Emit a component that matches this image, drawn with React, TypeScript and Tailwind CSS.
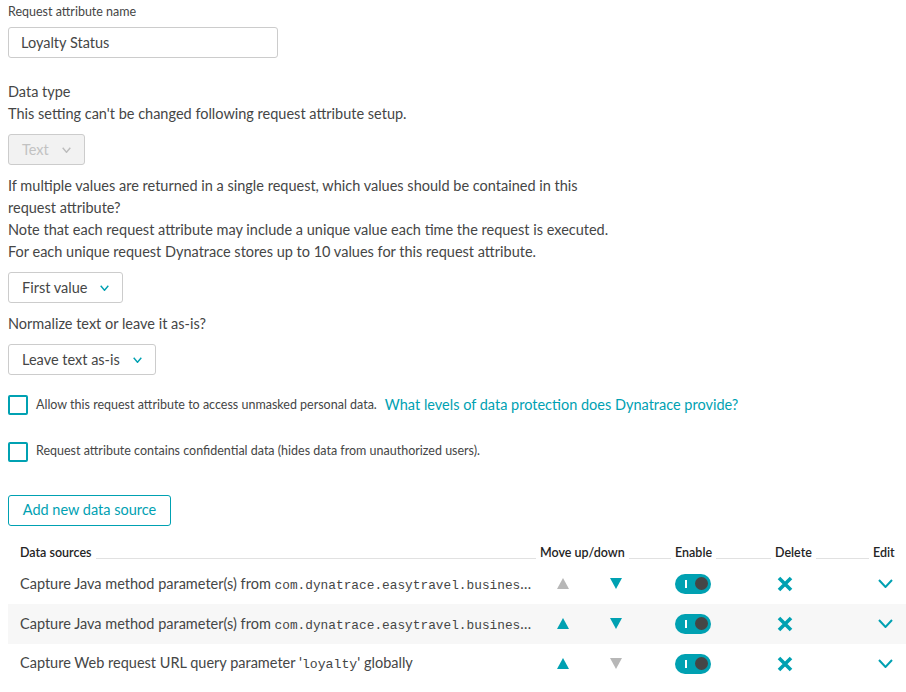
import React from "react";

const TEAL = "#00a1b2";

function Chevron({ color = TEAL, w = 10, h = 6, sw = 1.5 }: { color?: string; w?: number; h?: number; sw?: number }) {
  return (
    <svg width={w} height={h} viewBox={`0 0 ${w} ${h}`} fill="none">
      <path d={`M${sw / 2} ${sw / 2} L${w / 2} ${h - sw / 2} L${w - sw / 2} ${sw / 2}`} stroke={color} strokeWidth={sw} />
    </svg>
  );
}

function Select({ label, width, disabled }: { label: string; width: number; disabled?: boolean }) {
  return (
    <div
      className={`flex h-[31px] items-center rounded-[3px] border pl-[13px] text-[14.5px] ${
        disabled ? "border-[#cccccc] bg-[#f2f2f2] text-[#c2c2c2]" : "border-[#cccccc] bg-white text-[#454646]"
      }`}
      style={{ width }}
    >
      <span>{label}</span>
      <span className="ml-[13px] mt-[1px]">
        <Chevron color={disabled ? "#bdbdbd" : TEAL} w={9} h={6} sw={1.4} />
      </span>
    </div>
  );
}

function Checkbox() {
  return <div className="h-[20px] w-[20px] shrink-0 rounded-[2px] border-2 border-[#00a1b2] bg-white" />;
}

function Up({ active }: { active: boolean }) {
  return (
    <svg width="12" height="11" viewBox="0 0 12 11">
      <path d="M6 0 L12 11 L0 11 Z" fill={active ? TEAL : "#b7b7b7"} />
    </svg>
  );
}
function Down({ active }: { active: boolean }) {
  return (
    <svg width="12" height="11" viewBox="0 0 12 11">
      <path d="M0 0 L12 0 L6 11 Z" fill={active ? TEAL : "#b7b7b7"} />
    </svg>
  );
}

function Toggle() {
  return (
    <div className="flex h-[20px] w-[36px] items-center rounded-full bg-[#00a1b2]">
      <div className="ml-[10px] h-[8px] w-[1.5px] bg-white" />
      <div className="ml-[8px] h-[13px] w-[13px] rounded-full bg-[#454646]" />
    </div>
  );
}

function XIcon() {
  return (
    <svg width="16" height="16" viewBox="0 0 16 16">
      <path d="M2 2 L14 14 M14 2 L2 14" stroke={TEAL} strokeWidth="3.6" />
    </svg>
  );
}

const mono = { fontFamily: '"Liberation Mono", "DejaVu Sans Mono", monospace' };

function Row({ children, up, down, shaded }: { children: React.ReactNode; up: boolean; down: boolean; shaded?: boolean }) {
  return (
    <div className={`grid h-[40px] grid-cols-[532px_135px_100px_98px_33px] items-center ${shaded ? "bg-[#f7f7f7]" : ""}`}>
      <div className="whitespace-nowrap pl-[12px] text-[14.5px] text-[#454646]">{children}</div>
      <div className="flex items-center">
        <div className="ml-[17px]">
          <Up active={up} />
        </div>
        <div className="ml-[41px]">
          <Down active={down} />
        </div>
      </div>
      <div className="flex items-center">
        <Toggle />
      </div>
      <div className="flex items-center pl-[2px]">
        <XIcon />
      </div>
      <div className="flex items-center pl-[5px]">
        <Chevron w={15} h={9} sw={2} />
      </div>
    </div>
  );
}

function HeadCell({ label, line = true }: { label: string; line?: boolean }) {
  return (
    <div className="flex items-end">
      <span className="whitespace-nowrap leading-[16px]">{label}</span>
      {line && <div className="mb-[2px] ml-[4px] mr-[4px] h-px flex-1 bg-[#e1e1e1]" />}
    </div>
  );
}

export default function App() {
  return (
    <div
      className="min-h-[692px] w-[906px] bg-white pl-[8px] text-[#454646]"
      style={{ fontFamily: 'Lato, "Noto Sans", sans-serif' }}
    >
      <div className="pt-[4px] text-[12.5px] leading-[16px]">Request attribute name</div>
      <div className="mt-[7px] flex h-[31px] w-[270px] items-center rounded-[3px] border border-[#cccccc] pl-[12px] text-[14.5px]">
        Loyalty Status
      </div>

      <div className="mt-[23px] text-[14.5px] leading-[22px]">Data type</div>
      <div className="text-[14.5px] leading-[22px]">This setting can't be changed following request attribute setup.</div>
      <div className="mt-[9px]">
        <Select label="Text" width={77} disabled />
      </div>

      <div className="mt-[10px] w-[620px] text-[14.5px] leading-[22px]">
        <div>If multiple values are returned in a single request, which values should be contained in this</div>
        <div>request attribute?</div>
        <div>Note that each request attribute may include a unique value each time the request is executed.</div>
        <div>For each unique request Dynatrace stores up to 10 values for this request attribute.</div>
      </div>
      <div className="mt-[9px]">
        <Select label="First value" width={115} />
      </div>
      <div className="mt-[10px] text-[14.5px] leading-[22px]">Normalize text or leave it as-is?</div>
      <div className="mt-[9px]">
        <Select label="Leave text as-is" width={148} />
      </div>

      <div className="mt-[19px] flex items-center">
        <Checkbox />
        <span className="ml-[8px] text-[12.5px]">Allow this request attribute to access unmasked personal data.</span>
        <span className="ml-[8px] text-[14.5px] text-[#00a1b2]">What levels of data protection does Dynatrace provide?</span>
      </div>
      <div className="mt-[26px] flex items-center">
        <Checkbox />
        <span className="ml-[8px] text-[12.5px]">Request attribute contains confidential data (hides data from unauthorized users).</span>
      </div>

      <div className="mt-[33px] flex h-[31px] w-[163px] items-center justify-center rounded-[3px] border border-[#00a1b2] text-[14.5px] text-[#00a1b2]">
        Add new data source
      </div>

      <div className="mt-[13px] grid h-[22px] grid-cols-[532px_135px_100px_98px_33px] items-end text-[12.5px] font-semibold text-[#242424]">
        <div className="pl-[12px]">
          <HeadCell label="Data sources" />
        </div>
        <HeadCell label="Move up/down" />
        <HeadCell label="Enable" />
        <HeadCell label="Delete" />
        <HeadCell label="Edit" line={false} />
      </div>
      <div className="mt-[3px]">
        <Row up={false} down>
          Capture Java method parameter(s) from <span style={mono} className="text-[12.8px]">com.dynatrace.easytravel.busines</span>…
        </Row>
        <Row up down shaded>
          Capture Java method parameter(s) from <span style={mono} className="text-[12.8px]">com.dynatrace.easytravel.busines</span>…
        </Row>
        <Row up down={false}>
          Capture Web request URL query parameter '<span style={mono} className="text-[13.2px]">loyalty</span>' globally
        </Row>
      </div>
    </div>
  );
}
